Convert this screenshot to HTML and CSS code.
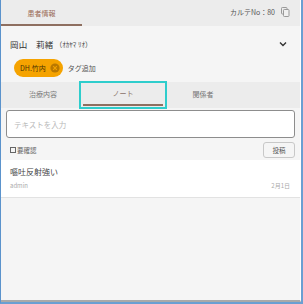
FILE: index.html
```html
<!DOCTYPE html>
<html lang="ja">
<head>
  <meta charset="UTF-8" />
  <title>患者情報</title>
  <link rel="stylesheet" href="styles.css">
</head>
<body>
  <div class="frame">
    <div class="panel">
      <div class="header">
        <div class="header-tab">患者情報</div>
        <div class="karte">
          <span>カルテNo：80</span>
          <svg class="copy" width="9" height="10" viewBox="0 0 9 10">
            <rect x="0.5" y="0.5" width="5.5" height="6.5" rx="0.8" fill="none" stroke="#999" />
            <rect x="2.5" y="2.5" width="5.5" height="7" rx="0.8" fill="#f0f0f0" stroke="#999" />
          </svg>
        </div>
      </div>

      <div class="patient">
        <span class="name">岡山　莉緒</span>
        <span class="kana">（ｵｶﾔﾏ ﾘｵ）</span>
        <svg class="chevron" width="8" height="6" viewBox="0 0 8 6">
          <polyline points="1,1.5 4,4.5 7,1.5" fill="none" stroke="#333" stroke-width="1.4" />
        </svg>
      </div>

      <div class="tags">
        <span class="tag">DH.竹内
          <svg class="tag-x" width="10" height="10" viewBox="0 0 10 10">
            <circle cx="5" cy="5" r="4.6" fill="#b97800" />
            <path d="M3.2 3.2 L6.8 6.8 M6.8 3.2 L3.2 6.8" stroke="#f5a300" stroke-width="1.1" />
          </svg>
        </span>
        <span class="tag-add">タグ追加</span>
      </div>

      <div class="tabs">
        <div class="tab">治療内容</div>
        <div class="tab active">ノート</div>
        <div class="tab">関係者</div>
      </div>

      <div class="input">テキストを入力</div>

      <div class="actions">
        <label class="check"><span class="box"></span>要確認</label>
        <button class="post">投稿</button>
      </div>

      <div class="note">
        <div class="note-text">嘔吐反射強い</div>
        <div class="note-meta">
          <span>admin</span>
          <span>2月1日</span>
        </div>
      </div>
    </div>
  </div>
</body>
</html>
```

FILE: styles.css
```css
* {
  margin: 0; padding: 0; box-sizing: border-box;
}
body {
  font-family: "Noto Sans CJK JP", "Noto Sans", sans-serif;
  background: #f5f5f5;
  color: #333;
}

.frame {
  width: 303px;
  height: 304px;
  border-left: 1px solid #5b93cc;
  border-right: 2px solid #6a9fd2;
  border-bottom: 2px solid #6a9fd2;
}
.panel {
  height: 100%;
  background: #f5f5f5;
  border-right: 1px solid #fff;
  border-bottom: 2px solid #a9a9a9;
}

/* header */
.header {
  display: flex;
  justify-content: space-between;
  align-items: stretch;
  height: 26px;
  background: #ececec;
}
.header-tab {
  width: 81px;
  display: flex;
  align-items: center;
  justify-content: center;
  font-size: 7px;
  color: #9a6a55;
  border-bottom: 2px solid #8e6f60;
  padding-top: 2px;
}
.karte {
  display: flex;
  align-items: center;
  gap: 6px;
  padding-right: 10px;
  padding-bottom: 2px;
  font-size: 7px;
  color: #555;
}

/* patient */
.patient {
  display: flex;
  align-items: center;
  height: 33px;
  padding: 2px 10px 0 9px;
}
.name {
  font-size: 8.5px;
  color: #333;
  letter-spacing: 0.02em;
}
.kana {
  font-size: 7px;
  color: #444;
  margin-left: 2px;
}
.chevron {
  margin-left: auto;
  margin-right: 3px;
}

/* tags */
.tags {
  display: flex;
  align-items: center;
  height: 18px;
  padding-left: 13px;
  gap: 5px;
}
.tag {
  display: flex;
  align-items: center;
  gap: 4px;
  height: 18px;
  padding: 0 3px 0 6px;
  border-radius: 9px;
  background: #f5a300;
  font-size: 7px;
  color: #4a3300;
}
.tag-add {
  font-size: 7px;
  color: #555;
}

/* tabs */
.tabs {
  position: relative;
  display: flex;
  height: 26px;
  margin-top: 5px;
  padding-left: 2px;
  background: #ececec;
}
.tab {
  width: 80px;
  height: 24px;
  display: flex;
  align-items: center;
  justify-content: center;
  font-size: 7px;
  color: #777;
}
.tab.active {
  position: relative;
  color: #8a7068;
  border-bottom: 2px solid #8e6f60;
}
.tab.active::after {
  content: "";
  position: absolute;
  left: -4px;
  right: -4px;
  top: -1px;
  bottom: -5px;
  border: 2.5px solid #2ecdcc;
}

/* input */
.input {
  height: 28px;
  margin: 2px 5px 0 5px;
  padding: 0 7px;
  display: flex;
  align-items: center;
  background: #fff;
  border: 1px solid #8d8d8d;
  border-radius: 3px;
  font-size: 7.5px;
  color: #b8b8b8;
}

.actions {
  display: flex;
  justify-content: space-between;
  align-items: center;
  height: 16px;
  margin-top: 4px;
  padding: 0 5px 0 9px;
}
.check {
  display: flex;
  align-items: center;
  gap: 1px;
  font-size: 6.5px;
  color: #666;
}
.box {
  width: 6px;
  height: 6px;
  border: 1px solid #666;
}
.post {
  width: 32px;
  height: 16px;
  border: 1px solid #c8c8c8;
  border-radius: 3px;
  background: #f5f5f5;
  font-family: inherit;
  font-size: 6.5px;
  color: #555;
}

/* note */
.note {
  margin-top: 2px;
  height: 38px;
  background: #fff;
  border-bottom: 1px solid #e2e2e2;
  padding: 6px 10px 0 9px;
}
.note-text {
  font-size: 8px;
  color: #444;
}
.note-meta {
  display: flex;
  justify-content: space-between;
  margin-top: 4px;
  font-size: 6px;
  color: #aaa;
}
```
